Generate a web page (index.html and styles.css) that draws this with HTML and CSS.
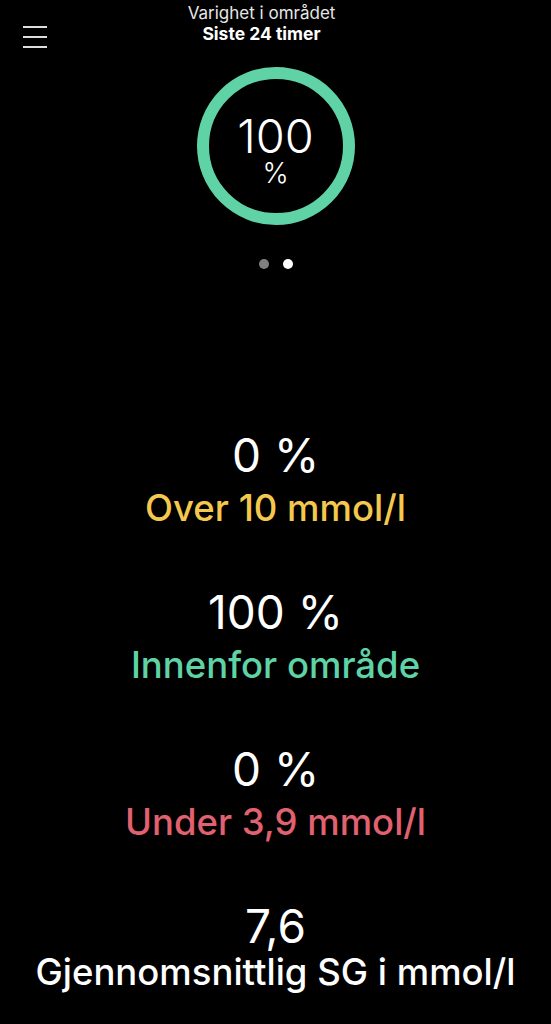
FILE: index.html
```html
<!doctype html>
<html>
<head>
<meta charset="utf-8">
<title>Varighet i området</title>
<link rel="stylesheet" href="styles.css">
</head>
<body>
<div class="screen">
	<div class="top">
		<div class="menu"><span></span><span></span><span></span></div>
		<div class="title">
			<div class="sub">Varighet i området</div>
			<div class="main">Siste 24 timer</div>
		</div>
	</div>

	<div class="ring">
		<svg width="160" height="160" viewBox="0 0 160 160">
			<circle cx="80" cy="80" r="73" fill="none" stroke="#5fd3a6" stroke-width="12"/>
		</svg>
		<div class="ring-text">
			<div class="num">100</div>
			<div class="pct">%</div>
		</div>
	</div>

	<div class="dots"><i></i><i class="on"></i></div>

	<ul class="stats">
		<li><div class="val">0 %</div><div class="lbl over">Over 10 mmol/l</div></li>
		<li><div class="val">100 %</div><div class="lbl in">Innenfor område</div></li>
		<li><div class="val">0 %</div><div class="lbl under">Under 3,9 mmol/l</div></li>
		<li class="avg"><div class="val">7,6</div><div class="lbl">Gjennomsnittlig SG i mmol/l</div></li>
	</ul>
</div>
</body>
</html>
```

FILE: styles.css
```css
*{ margin:0; padding:0; list-style:none; box-sizing:border-box;}
html,body{ background:#000;}
body{ font-family:Inter,"Noto Sans",sans-serif; color:#fff;}
.screen{ width:551px; height:1024px; overflow:hidden; display:flex; flex-direction:column; align-items:center;}

.top{ width:100%; display:flex; justify-content:center; position:relative; padding-top:2px;}
.menu{ position:absolute; left:23px; top:26px; width:24px; display:flex; flex-direction:column; gap:8.5px;}
.menu span{ display:block; height:1.5px; background:#ddd;}
.title{ text-align:center; margin-right:28px;}
.title .sub{ font-size:17px; line-height:22px; color:#e6e6e6;}
.title .main{ font-size:17.5px; line-height:20px; font-weight:700;}

.ring{ margin-top:22px; display:grid; width:160px; height:160px;}
.ring svg, .ring-text{ grid-area:1/1;}
.ring-text{ display:flex; flex-direction:column; align-items:center; justify-content:center; padding-top:6px;}
.ring-text .num{ font-size:47px; line-height:47px; font-weight:300;}
.ring-text .pct{ font-size:28px; line-height:28px; font-weight:300;}

.dots{ margin-top:33px; display:flex; gap:14px;}
.dots i{ width:10px; height:10px; border-radius:50%; background:#808080;}
.dots i.on{ background:#fff;}

.stats{ margin-top:158px; display:flex; flex-direction:column; gap:51px; text-align:center;}
.stats .val{ font-size:46px; line-height:56px; font-weight:400;}
.stats .lbl{ font-size:36.5px; line-height:50px; font-weight:500;}
.stats .over{ color:#f4c84e;}
.stats .in{ color:#5fd3a6;}
.stats .under{ color:#e0616f;}
.stats .avg .lbl{ line-height:36px; }
```
